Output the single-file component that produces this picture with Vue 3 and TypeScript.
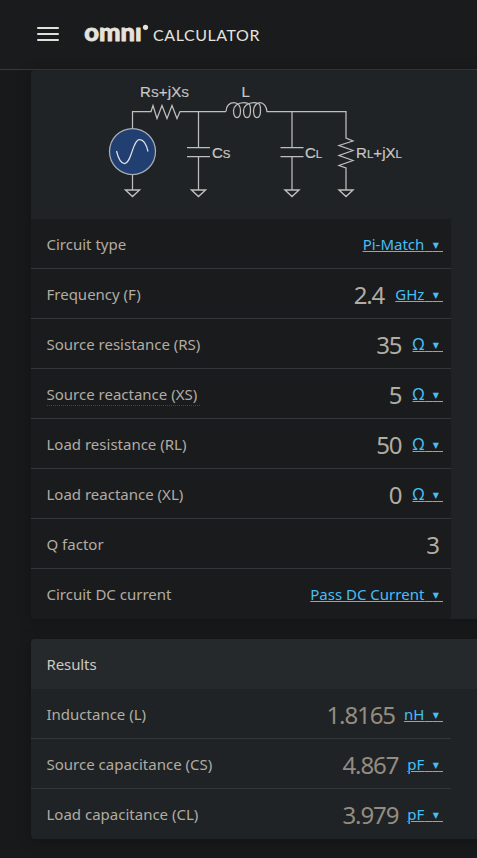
<script setup lang="ts">
interface Row {
  label: string
  value?: string
  unit?: string
  hinted?: boolean
}

const inputs: Row[] = [
  { label: 'Circuit type', unit: 'Pi-Match' },
  { label: 'Frequency (F)', value: '2.4', unit: 'GHz' },
  { label: 'Source resistance (RS)', value: '35', unit: 'Ω' },
  { label: 'Source reactance (XS)', value: '5', unit: 'Ω', hinted: true },
  { label: 'Load resistance (RL)', value: '50', unit: 'Ω' },
  { label: 'Load reactance (XL)', value: '0', unit: 'Ω' },
  { label: 'Q factor', value: '3' },
  { label: 'Circuit DC current', unit: 'Pass DC Current' },
]

const results: Row[] = [
  { label: 'Inductance (L)', value: '1.8165', unit: 'nH' },
  { label: 'Source capacitance (CS)', value: '4.867', unit: 'pF' },
  { label: 'Load capacitance (CL)', value: '3.979', unit: 'pF' },
]
</script>

<template>
  <div class="page">
    <header class="topbar">
      <div class="menu"><i></i><i></i><i></i></div>
      <svg class="logo" width="180" height="69" viewBox="0 0 180 69">
        <text class="omni" x="0.300" y="40.700" textLength="57.500" lengthAdjust="spacingAndGlyphs">omnı</text>
        <circle cx="61.500" cy="27.300" r="2.600" />
        <text class="calculator" x="69" y="41" textLength="106.500">CALCULATOR</text>
      </svg>
    </header>

    <main class="content">
      <section class="card inputs">
        <div class="figure">
          <svg class="circuit" width="420" height="149" viewBox="0 0 420 149" fill="none" stroke="#c0bebc" stroke-width="1.25">
            <path d="M101.500 58V41.500H120l2-6 4 13 5-13 5 13 5-13 5 13 3-7H195" />
            <path d="M195 41.500c0-6 4-9 8-9s6.500 3.500 6.500 8-1 7-3.500 7-3.500-3-3.500-7 4-8 10.500-8 6.500 3.500 6.500 8-1 7-3.500 7-3.500-3-3.500-7 4-8 10.500-8 6.500 3.500 6.500 8-1 7-3.500 7-3.500-3-3.500-7 3-8 6.500-8 6.500 4 7 9" />
            <path d="M235.500 41.500H315V68l7 3-14 4.500 14 5-14 5 14 5-14 5 7 2.500V120" />
            <path d="M167.500 41.500V77.500M156 77.500h23M156 86.500h23M167.500 86.500V120M261 41.500V77.500M249.500 77.500h23M249.500 86.500h23M261 86.500V120M101.500 104v16" />
            <path d="M94.500 120h14l-7 6.500zM160.500 120h14l-7 6.500zM254 120h14l-7 6.500zM308 120h14l-7 6.500z" stroke-width="1.400" />
            <circle cx="101.500" cy="81.500" r="23" fill="#213f70" stroke="#a9adb5" />
            <path d="M85.500 81c2 8 5 12.500 8 12.500 7 0 8-23.500 15-24 4 0 7 5 8.500 12" stroke="#dfe3e8" />
            <g class="names">
              <text x="109" y="27" textLength="49"><tspan>R</tspan><tspan class="sub">S</tspan>+jX<tspan class="sub">S</tspan></text>
              <text x="210.500" y="27">L</text>
              <text x="181" y="87.500">C<tspan class="sub">S</tspan></text>
              <text x="274" y="87.500">C<tspan class="sub">L</tspan></text>
              <text x="325" y="87.500" textLength="46">R<tspan class="sub">L</tspan>+jX<tspan class="sub">L</tspan></text>
            </g>
          </svg>
        </div>
        <div class="rows">
          <div v-for="row in inputs" :key="row.label" class="row">
            <span class="label" :class="{ hinted: row.hinted }">{{ row.label }}</span>
            <span v-if="row.value" class="value" :class="{ alone: !row.unit }">{{ row.value }}</span>
            <a v-if="row.unit" class="unit"><span :class="{ ohm: row.unit === 'Ω' }">{{ row.unit }}</span><span class="gap">&nbsp;</span><span class="arrow">▼</span><span class="tail">&nbsp;</span></a>
          </div>
        </div>
      </section>

      <section class="card results">
        <h2 class="heading">Results</h2>
        <div class="rows">
          <div v-for="row in results" :key="row.label" class="row">
            <span class="label">{{ row.label }}</span>
            <span class="value">{{ row.value }}</span>
            <a class="unit">{{ row.unit }}<span class="gap">&nbsp;</span><span class="arrow">▼</span><span class="tail">&nbsp;</span></a>
          </div>
        </div>
      </section>
    </main>
  </div>
</template>

<style>
body {
  background: #18191b;
  overflow: hidden;
}
</style>

<style scoped>
.page {
  box-sizing: border-box;
  height: 858px;
  overflow: hidden;
  background: #18191b;
  border-bottom: 1px solid #1d131b;
  color: #b2aca2;
  font-family: "Noto Sans", "Open Sans", sans-serif;
}
.topbar {
  box-sizing: border-box;
  height: 70px;
  display: flex;
  align-items: flex-start;
  padding-left: 37px;
  background: #1a1b1d;
  border-bottom: 1px solid #343a3d;
}
.menu {
  display: flex;
  flex-direction: column;
  gap: 4px;
  width: 22px;
  padding-top: 27px;
  margin-right: 25px;
}
.menu i {
  height: 2px;
  border-radius: 1px;
  background: #e3e0db;
}
.logo {
  display: block;
  fill: #e6e3de;
}
.omni {
  font: 900 25px Lato, sans-serif;
  stroke: #e6e3de;
  stroke-width: 0.8;
  stroke-linejoin: round;
}
.calculator {
  font: 400 16px Lato, sans-serif;
}
.content {
  padding-left: 31px;
}
.card {
  width: 460px;
  overflow: hidden;
  border-radius: 4px;
  background: #1f2325;
}
.inputs {
  box-shadow: 0 2px 14px rgba(0, 0, 0, 0.25);
}
.figure {
  height: 149px;
}
.circuit {
  display: block;
}
.names text {
  fill: #c9c7c4;
  stroke: #c9c7c4;
  stroke-width: 0.2;
  font: 15px "Liberation Sans", sans-serif;
}
.names .sub {
  font-size: 11.500px;
}
.rows {
  width: 420px;
}
.inputs .rows {
  background: #1a1b1d;
}
.row {
  box-sizing: border-box;
  height: 50px;
  display: flex;
  align-items: center;
  padding: 0 8px 0 15.500px;
  border-bottom: 1px solid #343739;
}
.row:last-child {
  border-bottom-color: transparent;
}
.label {
  margin-right: auto;
  font-size: 15px;
  line-height: 22px;
}
.hinted {
  margin-top: 2px;
  padding-right: 3px;
  line-height: 22px;
  border-bottom: 1px dotted #444749;
}
.value {
  margin-right: 11px;
  padding-top: 3px;
  font-size: 24px;
  line-height: 32px;
  letter-spacing: -1.100px;
}
.results .value {
  margin-right: 9px;
  color: #958c80;
}
.value.alone {
  margin-right: 4px;
}
.unit {
  padding-top: 4px;
  color: #47bff5;
  font-size: 15px;
  line-height: 22px;
  text-decoration: underline;
  text-decoration-thickness: 1px;
  text-underline-offset: 1px;
  white-space: nowrap;
}
.ohm {
  font-size: 16.500px;
}
.gap {
  letter-spacing: 4.500px;
}
.arrow {
  font-family: "DejaVu Sans", sans-serif;
  font-size: 8px;
  position: relative;
  top: -2px;
}
.tail {
  letter-spacing: 0.200px;
}
.results {
  margin-top: 20px;
  height: 200px;
  box-shadow: 0 2px 14px rgba(0, 0, 0, 0.25);
}
.heading {
  margin: 0;
  height: 50px;
  padding-left: 15.500px;
  background: #25292b;
  color: #cdc8c0;
  font-size: 15px;
  font-weight: 400;
  line-height: 50px;
  letter-spacing: -0.1px;
}
</style>
